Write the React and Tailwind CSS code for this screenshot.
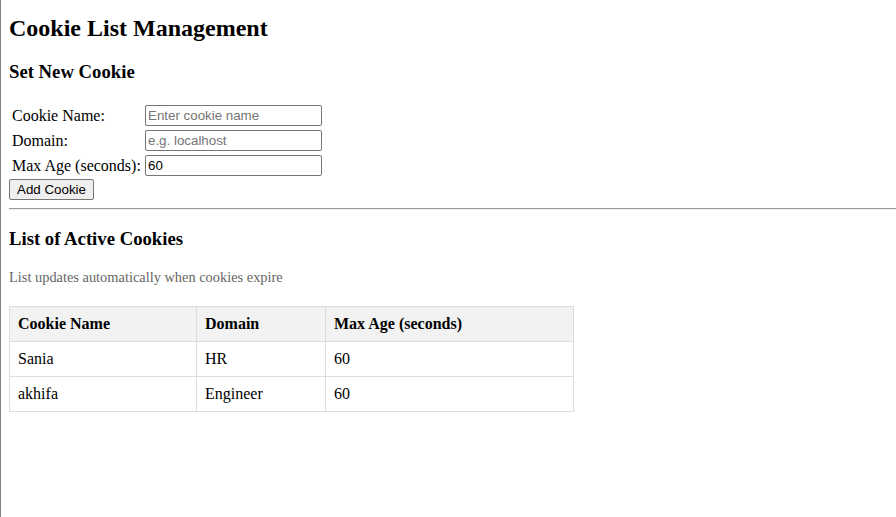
import { useState } from 'react';

export default function App() {
  const [cookies] = useState([
    { name: 'Sania', domain: 'HR', maxAge: 60 },
    { name: 'akhifa', domain: 'Engineer', maxAge: 60 },
  ]);
  const [name, setName] = useState('');
  const [domain, setDomain] = useState('');
  const [maxAge, setMaxAge] = useState('60');

  const inputCls =
    "block w-[177px] h-[21px] px-[2px] py-px border border-[#767676] rounded-[2px] bg-white text-black text-[13.33px] font-['Liberation_Sans',Arial,sans-serif] placeholder:text-[#757575] outline-none";

  return (
    <div className="min-h-screen border-l border-[#808080] pl-[8px] pt-[14.5px] bg-white text-black font-['Liberation_Serif','Times_New_Roman',serif]">
      <h1 className="text-[24px] leading-[27px] font-bold">Cookie List Management</h1>

      <h3 className="mt-[19.5px] text-[18.72px] leading-[21px] font-bold">Set New Cookie</h3>

      <table className="mt-[20px] border-separate border-spacing-[2px] text-[16px] leading-[18px]">
        <tbody>
          <tr>
            <td className="p-px align-middle w-[131px]">Cookie Name:</td>
            <td className="p-px">
              <input className={inputCls} placeholder="Enter cookie name" value={name} onChange={e => setName(e.target.value)} />
            </td>
          </tr>
          <tr>
            <td className="p-px align-middle">Domain:</td>
            <td className="p-px">
              <input className={inputCls} placeholder="e.g. localhost" value={domain} onChange={e => setDomain(e.target.value)} />
            </td>
          </tr>
          <tr>
            <td className="p-px align-middle whitespace-nowrap">Max Age (seconds):</td>
            <td className="p-px">
              <input className={inputCls} value={maxAge} onChange={e => setMaxAge(e.target.value)} />
            </td>
          </tr>
        </tbody>
      </table>

      <button className="block w-[85px] h-[21px] border border-[#767676] rounded-[2px] bg-[#efefef] text-black text-[13.33px] leading-[15px] font-['Liberation_Sans',Arial,sans-serif]">
        Add Cookie
      </button>

      <hr className="mt-[7.5px] h-0 border-t border-t-[#9a9a9a] border-b border-b-[#eeeeee]" />

      <h3 className="mt-[18.5px] text-[18.72px] leading-[21px] font-bold">List of Active Cookies</h3>

      <p className="mt-[19.5px] text-[14.4px] leading-[16.5px] text-[#666666]">List updates automatically when cookies expire</p>

      <table className="mt-[20.5px] w-[564px] table-fixed border-collapse text-[16px] leading-[18px]">
        <colgroup>
          <col className="w-[187px]" />
          <col className="w-[129px]" />
          <col className="w-[248px]" />
        </colgroup>
        <thead>
          <tr className="bg-[#f2f2f2]">
            <th className="border border-[#dddddd] p-[8px] text-left font-bold">Cookie Name</th>
            <th className="border border-[#dddddd] p-[8px] text-left font-bold">Domain</th>
            <th className="border border-[#dddddd] p-[8px] text-left font-bold">Max Age (seconds)</th>
          </tr>
        </thead>
        <tbody>
          {cookies.map(c => (
            <tr key={c.name}>
              <td className="border border-[#dddddd] p-[8px]">{c.name}</td>
              <td className="border border-[#dddddd] p-[8px]">{c.domain}</td>
              <td className="border border-[#dddddd] p-[8px]">{c.maxAge}</td>
            </tr>
          ))}
        </tbody>
      </table>
    </div>
  );
}
